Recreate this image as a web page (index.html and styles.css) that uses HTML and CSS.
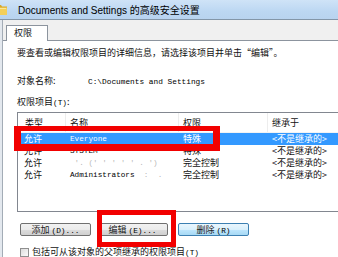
FILE: index.html
```html
<!DOCTYPE html>
<html>
<head>
<meta charset="utf-8">
<link rel="stylesheet" href="styles.css">
</head>
<body>
<div class="titlebar">
  <svg class="folder" width="10" height="12" viewBox="0 0 10 12">
    <path d="M0 2 L4 2 L5 3.5 L10 3.5 L10 12 L0 12 Z" fill="#d9a826"/>
    <path d="M0 4.5 L10 4.5 L10 12 L0 12 Z" fill="#f3cf5a"/>
    <path d="M1 5.5 L9 5.5" stroke="#fbe79a" stroke-width="1"/>
  </svg>
  <span class="title">Documents and Settings 的高级安全设置</span>
</div>
<div class="dialog">
  <div class="tabstrip"><div class="tab">权限</div></div>
  <div class="panel">
    <p class="intro">要查看或编辑权限项目的详细信息，请选择该项目并单击“编辑”。</p>
    <div class="objrow"><span class="objlabel">对象名称:</span><span class="mono">C:\Documents and Settings</span></div>
    <p class="listlabel">权限项目<span class="mono">(T)</span>:</p>
    <div class="list">
      <div class="row head"><div class="c1">类型</div><div class="c2">名称</div><div class="c3">权限</div><div class="c4">继承于</div></div>
      <div class="row sel"><div class="c1">允许</div><div class="c2 mono">Everyone</div><div class="c3">特殊</div><div class="c4">&lt;不是继承的&gt;</div></div>
      <div class="row"><div class="c1">允许</div><div class="c2 mono">SYSTEM</div><div class="c3">特殊</div><div class="c4">&lt;不是继承的&gt;</div></div>
      <div class="row"><div class="c1">允许</div><div class="c2 mono faint">&nbsp;'.&nbsp;('&nbsp;'&nbsp;'&nbsp;'&nbsp;'&nbsp;.&nbsp;')</div><div class="c3">完全控制</div><div class="c4">&lt;不是继承的&gt;</div></div>
      <div class="row"><div class="c1">允许</div><div class="c2 mono">Administrators <span class="faint">&nbsp;:&nbsp;&nbsp;.</span></div><div class="c3">完全控制</div><div class="c4">&lt;不是继承的&gt;</div></div>
    </div>
    <div class="buttons">
      <div class="btn">添加 <span class="mono">(D)...</span></div>
      <div class="btn btn-edit">编辑 <span class="mono">(E)...</span></div>
      <div class="btn btn-del">删除 <span class="mono">(R)</span></div>
    </div>
    <div class="check"><span class="box"></span><span>包括可从该对象的父项继承的权限项目<span class="mono">(T)</span></span></div>
  </div>
</div>
<div class="mark mark-row"></div>
<div class="mark mark-btn"></div>
</body>
</html>
```
FILE: styles.css
```css
* { box-sizing: border-box; }
html, body {
  margin: 0;
  padding: 0;
}
body {
  width: 338px;
  height: 257px;
  overflow: hidden;
  position: relative;
  background: #e3e8ee;
  font-family: "Noto Sans CJK SC", "Noto Sans", sans-serif;
  font-size: 9px;
  color: #111;
}
.mono {
  font-family: "Liberation Mono", "DejaVu Sans Mono", monospace;
  font-size: 7.8px;
  color: #000;
}
.titlebar {
  height: 20px;
  border-bottom: 1px solid #8396a8;
  background: linear-gradient(#cfe3f7, #bcd7f2 60%, #b8d3ef);
  display: flex;
  align-items: center;
}
.folder {
  margin-left: -3px;
  margin-top: -2px;
  flex: none;
}
.title {
  margin-left: 11px;
  font-family: "Liberation Sans", "Noto Sans CJK SC", sans-serif;
  font-size: 10px;
  color: #000;
  white-space: nowrap;
}
.dialog {
  margin-left: 2px;
  border-left: 1px solid #a3acb6;
  height: 237px;
  background: #f0f0f0;
}
.tabstrip {
  height: 20px;
  padding-left: 3px;
  padding-top: 5px;
  display: flex;
  align-items: flex-end;
}
.tab {
  width: 42px;
  height: 16px;
  background: #ffffff;
  border: 1px solid #8c949e;
  border-bottom: none;
  padding-left: 7px;
  line-height: 14px;
  position: relative;
  margin-bottom: -1px;
  z-index: 1;
}
.panel {
  border-top: 1px solid #8c949e;
  background: #ffffff;
  height: 217px;
  padding-left: 14px;
}
.intro {
  margin: 6px 0 0 0;
  line-height: 12px;
  white-space: nowrap;
}
.objrow {
  margin-top: 16px;
  line-height: 12px;
  display: flex;
  align-items: baseline;
}
.objlabel { width: 71px; }
.listlabel {
  margin: 8px 0 0 0;
  line-height: 12px;
}
.list {
  margin-top: 3px;
  height: 100px;
  width: 321px;
  border: 1px solid #828790;
  border-right: none;
  background: #fff;
  overflow: hidden;
}
.row {
  display: grid;
  grid-template-columns: 48px 113px 89px 71px;
  height: 12px;
  line-height: 12px;
  white-space: nowrap;
}
.row > div { padding-left: 4px; overflow: hidden; }
.row > .c1 { padding-left: 6px; }
.row.head {
  height: 20px;
  line-height: 20px;
  border-bottom: 1px solid #f3f3f3;
}
.row.head > div { border-right: 1px solid #ededed; }
.row.head > .c1 { padding-left: 7px; }
.row.sel {
  background: #3399ff;
  color: #ffffff;
}
.row.sel .mono { color: #fff; }
.row .mono { font-size: 7.7px; }
.faint, .row .faint { color: #b8b8b8; }
.buttons {
  margin-top: 11px;
  margin-left: 3px;
  display: flex;
}
.btn {
  width: 71px;
  height: 13px;
  border: 1px solid #707070;
  border-radius: 2px;
  background: linear-gradient(#f2f2f2, #ebebeb 50%, #dddddd 51%, #cfcfcf);
  text-align: center;
  line-height: 11px;
  color: #222;
}
.btn-edit { margin-left: 6px; }
.btn-del {
  margin-left: 10px;
  border-color: #3c7fb1;
  background: linear-gradient(#eaf6fd, #d9f0fc 50%, #bee6fd 51%, #a7d9f5);
}
.check {
  margin-top: 10px;
  margin-left: 3px;
  display: flex;
  align-items: center;
  line-height: 12px;
  white-space: nowrap;
}
.box {
  width: 9px;
  height: 9px;
  border: 1px solid #8f8f8f;
  background: linear-gradient(135deg, #dcdcdc, #fbfbfb);
  margin-right: 3px;
  flex: none;
}
.mark {
  position: absolute;
  border: 5px solid #f20000;
}
.mark-row {
  left: 14px;
  top: 126px;
  width: 206px;
  height: 25px;
  border-bottom-width: 7px;
  border-left-width: 7px;
  border-right-width: 7px;
}
.mark-btn {
  left: 97px;
  top: 210px;
  width: 79px;
  height: 37px;
}
```
